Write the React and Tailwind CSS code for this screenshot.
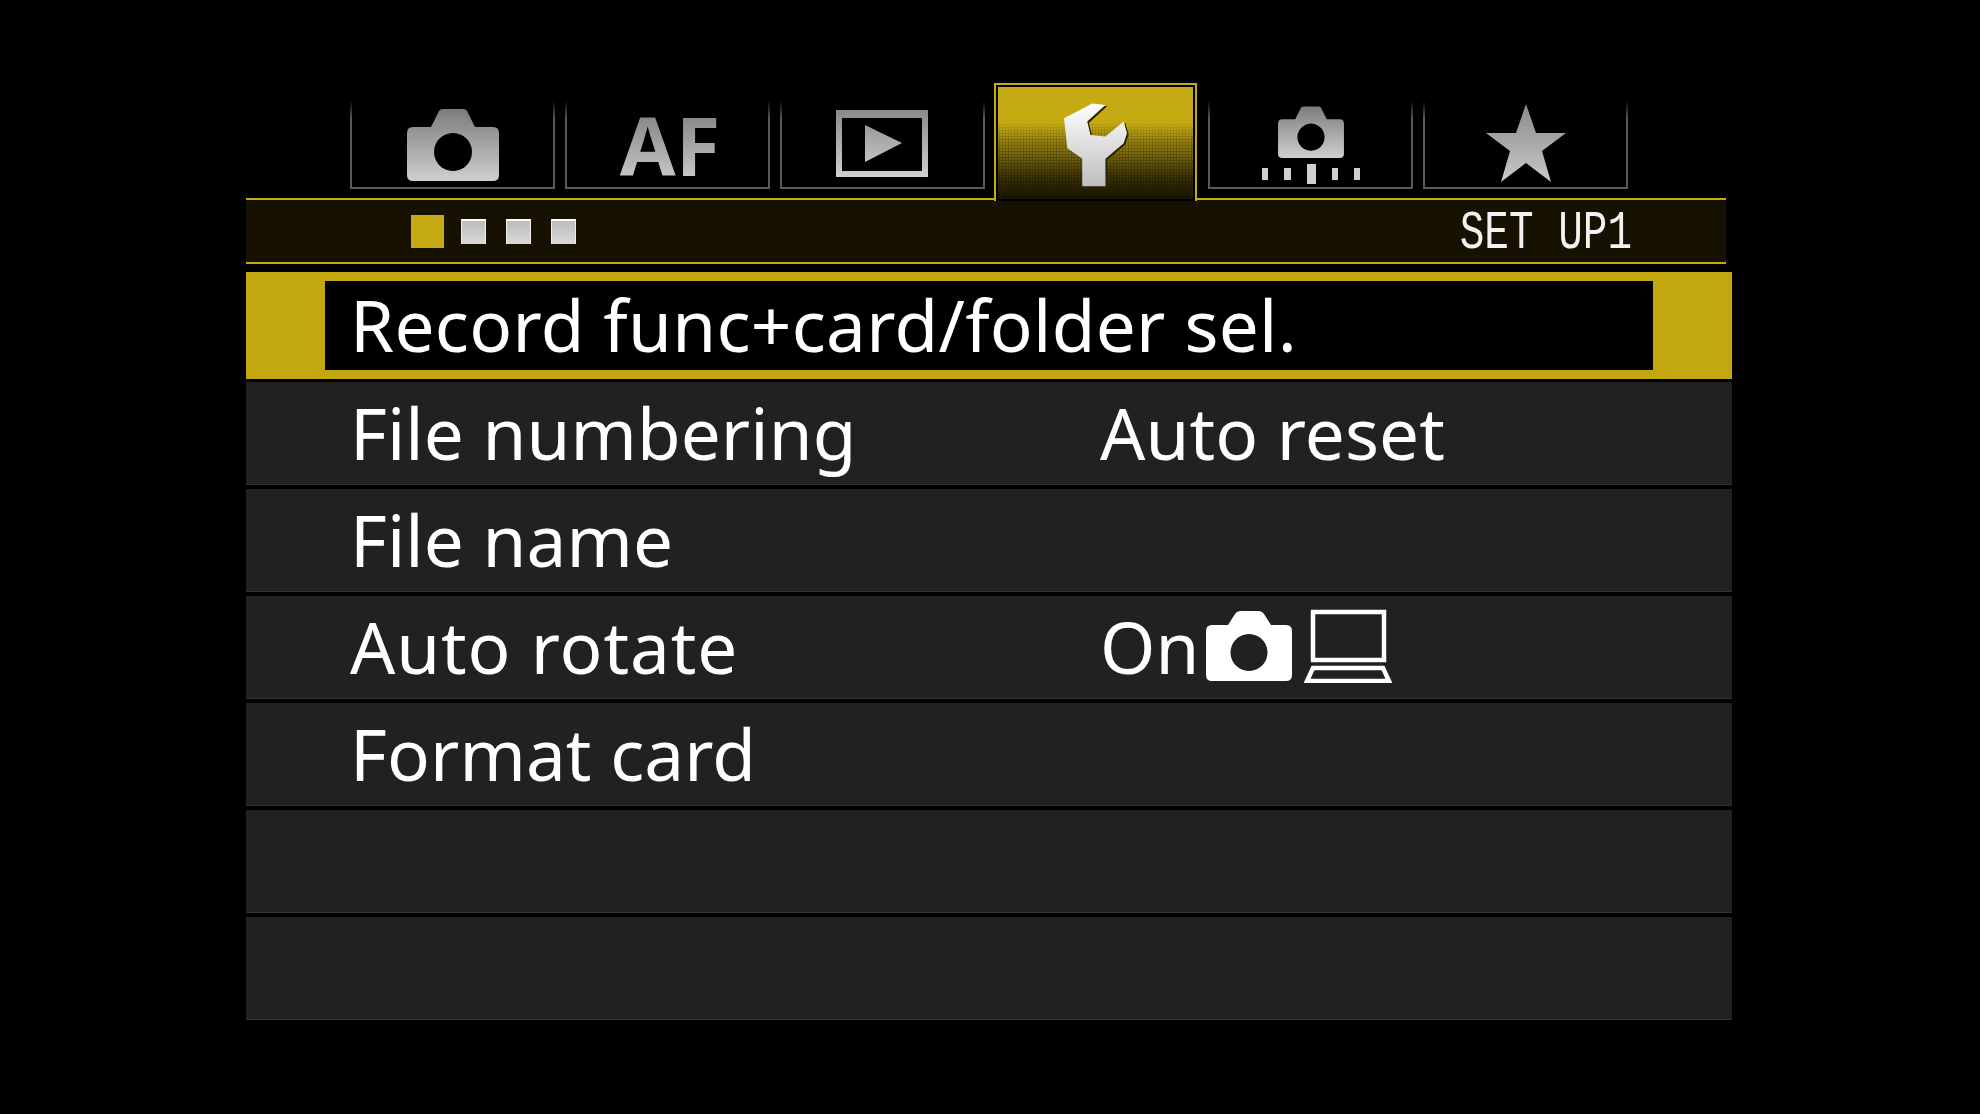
import { useId } from 'react';

const GrayFill = ({ id, from = '#7c7c7c', to = '#cfcfcf' }) => (
    <defs>
        <linearGradient id={id} x1="0" y1="0" x2="0" y2="1">
            <stop offset="0" stopColor={from} />
            <stop offset="1" stopColor={to} />
        </linearGradient>
    </defs>
);

const cameraPath =
    'M6 20H24L32 4Q33 2 36 2H56Q59 2 60 4L68 20H86Q92 20 92 26V68Q92 74 86 74H6Q0 74 0 68V26Q0 20 6 20Z';

const CameraIcon = ({ className, r = 19 }) => {
    const id = useId();
    return (
        <svg viewBox="0 0 92 74" className={className}>
            <GrayFill id={id} />
            <path
                fillRule="evenodd"
                fill={`url(#${id})`}
                d={`${cameraPath}M46 ${45 - r}a${r} ${r} 0 1 0 0.01 0Z`}
            />
        </svg>
    );
};

const PlayIcon = () => {
    const id = useId();
    return (
        <svg viewBox="0 0 92 67" className="w-[92px] h-[67px] -ml-[2px] -mt-[2px]">
            <GrayFill id={id} from="#8a8a8a" to="#d0d0d0" />
            <path
                fillRule="evenodd"
                fill={`url(#${id})`}
                d="M0 0H92V67H0ZM6 8V61H86V8ZM29 15L66 33L29 52Z"
            />
        </svg>
    );
};

const RemoteIcon = () => (
    <div className="flex flex-col items-center gap-[6px]">
        <CameraIcon className="w-[66px] h-[53px]" />
        <div className="flex items-center gap-[16px]">
            <div className="w-[6px] h-[12px] bg-[#cfcfcf]" />
            <div className="w-[7px] h-[12px] bg-[#cfcfcf]" />
            <div className="w-[9px] h-[20px] bg-[#cfcfcf]" />
            <div className="w-[6px] h-[12px] bg-[#cfcfcf]" />
            <div className="w-[6px] h-[12px] bg-[#cfcfcf]" />
        </div>
    </div>
);

const StarIcon = () => {
    const id = useId();
    return (
        <svg viewBox="0 0 80 78" className="w-[80px] h-[78px] -mt-[3px] ml-[1px]">
            <GrayFill id={id} from="#8a8a8a" to="#c8c8c8" />
            <polygon fill={`url(#${id})`} points="40,0 50,29 80,29 56,47 65,78 40,59 15,78 24,47 0,29 30,29" />
        </svg>
    );
};

const WrenchIcon = () => {
    const id = useId();
    const points = '0,45 85,0 125,5 70,55 80,95 125,100 180,55 190,90 180,120 125,167 125,250 55,250 55,167 10,135';
    return (
        <svg viewBox="0 0 196 254" className="w-[65px] h-[85px] relative mt-[4px] ml-[1px]">
            <GrayFill id={id} from="#ffffff" to="#bdbdbd" />
            <polygon fill="#2a2200" points={points} transform="translate(5 4)" />
            <polygon fill={`url(#${id})`} points={points} />
        </svg>
    );
};

const LaptopIcon = () => (
    <svg viewBox="0 0 88 74" className="w-[88px] h-[74px] ml-[12px]" fill="none" stroke="#fff" strokeWidth="4.5">
        <rect x="9" y="3" width="71" height="48" />
        <path d="M9 59H79L85 72H3Z" />
    </svg>
);

const WhiteCamera = () => (
    <svg viewBox="0 0 86 70" className="w-[86px] h-[70px] ml-[6px]">
        <path
            fillRule="evenodd"
            fill="#fff"
            d="M6 14H22L29 3Q31 0 35 0H52Q56 0 58 3L65 14H80Q86 14 86 20V64Q86 70 80 70H6Q0 70 0 64V20Q0 14 6 14ZM43 23a18.500 18.500 0 1 0 0.01 0Z"
        />
    </svg>
);

const Tab = ({ children }) => (
    <div className="w-[205px] h-[88px] mt-[18px] flex items-center justify-center border-2 border-t-0 [border-image:linear-gradient(to_bottom,transparent,#5a5a5a_22%)_1]">
        {children}
    </div>
);

const ActiveTab = () => (
    <div className="w-[203px] h-[118px] -mb-[2px] ml-[-1px] mr-[1px] p-[2px] border-2 border-b-0 border-[#c6aa12] bg-black relative z-10">
        <div className="relative h-full flex items-center justify-center bg-[linear-gradient(to_bottom,#c6aa12_0%,#c6aa12_32%,#8a7610_55%,#3d3406_80%,#161100_100%)]">
            <div className="absolute inset-0 bg-[radial-gradient(circle,#00000038_1px,transparent_1.2px)] bg-[size:3px_3px] [mask-image:linear-gradient(to_bottom,transparent_30%,#000_50%,#000_85%,transparent)]" />
            <WrenchIcon />
        </div>
    </div>
);

const PageDot = () => (
    <div className="w-[25px] h-[25px] border-t-2 border-l border-r border-t-white border-x-[#eeeeee] bg-[linear-gradient(to_bottom,#bdbdbd,#d8d8d8)]" />
);

const Row = ({ label, children }) => (
    <div className="h-[103px] flex items-center pl-[104px] pb-[2px] bg-[#212121] border-b border-[#333333] text-white">
        <div className="w-[750px]">{label}</div>
        <div className="flex items-center">{children}</div>
    </div>
);

export default function App() {
    return (
        <div
            className="w-[1980px] h-[1114px] bg-black pt-[83px] pl-[246px] overflow-hidden text-[71px] leading-none tracking-[0.1px]"
            style={{ fontFamily: '"Noto Sans", sans-serif' }}
        >
            {/* Tabs */}
            <div className="w-[1480px] h-[117px] border-b-2 border-[#c6aa12] flex items-start pl-[104px] gap-[10px]">
                <Tab><CameraIcon className="w-[92px] h-[74px]" /></Tab>
                <Tab>
                    <span
                        className="ml-[5px] bg-gradient-to-b from-[#7c7c7c] to-[#cfcfcf] bg-clip-text text-transparent font-bold text-[81px] tracking-normal"
                        style={{ fontFamily: '"Open Sans", sans-serif' }}
                    >
                        AF
                    </span>
                </Tab>
                <Tab><PlayIcon /></Tab>
                <ActiveTab />
                <Tab><RemoteIcon /></Tab>
                <Tab><StarIcon /></Tab>
            </div>

            {/* Page indicator */}
            <div className="w-[1480px] h-[64px] bg-[#161100] border-b-2 border-[#c6aa12] flex items-center pl-[165px] pr-[94px]">
                <div className="w-[33px] h-[33px] bg-[#c6aa12] mr-[17px]" />
                <div className="flex gap-[20px]">
                    <PageDot />
                    <PageDot />
                    <PageDot />
                </div>
                <div
                    className="ml-auto mt-[6px] text-[41px] text-[#f2f2f2] scale-y-[1.3] tracking-normal"
                    style={{ fontFamily: '"Liberation Mono", monospace' }}
                >
                    SET UP1
                </div>
            </div>

            {/* Menu */}
            <div className="w-[1486px] mt-[8px] flex flex-col gap-[4px]">
                <div className="h-[107px] bg-[#c2a711] pl-[79px] pr-[79px] py-[9px] mb-[-1px]">
                    <div className="h-full bg-black flex items-center pl-[25px] pb-[2px] text-white tracking-[0.3px]">
                        Record func+card/folder sel.
                    </div>
                </div>
                <Row label="File numbering">Auto reset</Row>
                <Row label="File name" />
                <Row label={<span className="tracking-[0.9px]">Auto rotate</span>}>
                    On
                    <WhiteCamera />
                    <LaptopIcon />
                </Row>
                <Row label="Format card" />
                <Row />
                <Row />
            </div>
        </div>
    );
}
